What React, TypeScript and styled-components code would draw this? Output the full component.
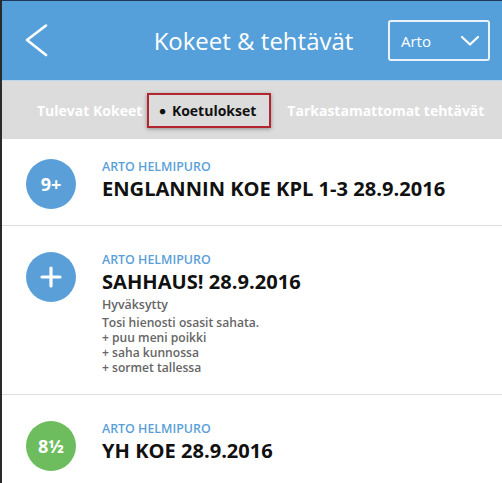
import React from "react";
import styled, { createGlobalStyle } from "styled-components";

const Global = createGlobalStyle`
  html, body { margin: 0; padding: 0; background: #ffffff; }
  body { font-family: "Open Sans", Lato, sans-serif; overflow: hidden; }
  * { box-sizing: border-box; }
`;

const Page = styled.div`
  width: 502px;
  height: 483px;
  overflow: hidden;
  border-left: 2px solid #2a2a2a;
  background: #ffffff;
`;

const Header = styled.header`
  height: 81px;
  background: #55a0da;
  border-top: 1px solid #1d3a58;
  border-bottom: 1px solid #bcd6ec;
  display: grid;
  grid-template-columns: 100px 1fr 100px;
  align-items: center;
  position: relative;
  padding: 0 12px 0 23px;
`;

const BackButton = styled.div`
  display: flex;
  align-items: center;
  height: 36px;
`;

const Title = styled.h1`
  margin: 0;
  text-align: center;
  color: #ffffff;
  font-size: 24px;
  font-weight: 400;
  padding-right: 8px;
`;

const Select = styled.div`
  position: absolute;
  left: 386px;
  top: 19px;
  width: 102px;
  height: 41px;
  border: 2px solid #e9f3fb;
  border-radius: 3px;
  display: flex;
  align-items: center;
  justify-content: space-between;
  padding: 0 8px 0 11px;
  color: #ffffff;
  font-size: 15px;
`;

const TabBar = styled.nav`
  height: 58px;
  background: #dcdcdc;
  display: flex;
  align-items: center;
  padding-left: 35px;
  white-space: nowrap;
`;

const Tab = styled.div<{ $active?: boolean }>`
  font-size: 14px;
  font-weight: 700;
  color: ${(p) => (p.$active ? "#111111" : "#ffffff")};
  ${(p) =>
    p.$active &&
    `
    margin: 0 16px 0 5px;
    height: 35px;
    padding: 0 13px 0 10px;
    display: flex;
    align-items: center;
    border: 2px solid #b3262d;
    box-shadow: 0 1px 4px rgba(0,0,0,0.35);
  `}
`;

const Dot = styled.span`
  font-size: 11px;
  margin-right: 6px;
`;

const List = styled.div``;

const Row = styled.div<{ $top: number; $bottom: number }>`
  display: flex;
  align-items: flex-start;
  gap: 26px;
  padding: ${(p) => p.$top}px 0 ${(p) => p.$bottom}px 24px;
  border-bottom: 1px solid #dedede;
`;

const Badge = styled.div<{ $color: string }>`
  flex: 0 0 50px;
  width: 50px;
  height: 50px;
  border-radius: 50%;
  background: ${(p) => p.$color};
  color: #ffffff;
  display: flex;
  align-items: center;
  justify-content: center;
  font-size: 18px;
  font-weight: 700;
`;

const Info = styled.div`
  display: flex;
  flex-direction: column;
`;

const Teacher = styled.div`
  color: #5a9fd8;
  font-size: 12.4px;
  font-weight: 600;
  line-height: 16px;
`;

const Heading = styled.div`
  color: #111111;
  font-size: 20.1px;
  font-weight: 700;
  line-height: 24px;
  margin-top: 2px;
`;

const Status = styled.div`
  color: #666666;
  font-size: 12.4px;
  font-weight: 600;
  line-height: 16px;
  margin-top: 3px;
`;

const Comment = styled.div`
  color: #666666;
  font-size: 12.1px;
  font-weight: 600;
  line-height: 15px;
  margin-top: 2px;
`;

const PlusIcon = () => (
  <svg width="22" height="22" viewBox="0 0 22 22">
    <path d="M11 2 V20 M2 11 H20" stroke="#fff" strokeWidth="3.2" strokeLinecap="round" />
  </svg>
);

export default function App() {
  return (
    <>
      <Global />
      <Page>
        <Header>
          <BackButton>
            <svg width="24" height="34" viewBox="0 0 24 34">
              <polyline points="21,1.5 2,16 21,31" fill="none" stroke="#fff" strokeWidth="2.6" strokeLinecap="round" strokeLinejoin="round" />
            </svg>
          </BackButton>
          <Title>Kokeet &amp; tehtävät</Title>
          <div />
          <Select>
            <span>Arto</span>
            <svg width="20" height="12" viewBox="0 0 20 12">
              <polyline points="2,2 10,9.5 18,2" fill="none" stroke="#fff" strokeWidth="2.2" strokeLinecap="round" strokeLinejoin="round" />
            </svg>
          </Select>
        </Header>
        <TabBar>
          <Tab>Tulevat Kokeet</Tab>
          <Tab $active>
            <Dot>●</Dot>Koetulokset
          </Tab>
          <Tab>Tarkastamattomat tehtävät</Tab>
        </TabBar>
        <List>
          <Row $top={20} $bottom={16}>
            <Badge $color="#5a9fd8">9+</Badge>
            <Info>
              <Teacher>ARTO HELMIPURO</Teacher>
              <Heading>ENGLANNIN KOE KPL 1-3 28.9.2016</Heading>
            </Info>
          </Row>
          <Row $top={26} $bottom={19}>
            <Badge $color="#5a9fd8"><PlusIcon /></Badge>
            <Info>
              <Teacher>ARTO HELMIPURO</Teacher>
              <Heading>SAHHAUS! 28.9.2016</Heading>
              <Status>Hyväksytty</Status>
              <Comment>
                Tosi hienosti osasit sahata.<br />
                + puu meni poikki<br />
                + saha kunnossa<br />
                + sormet tallessa
              </Comment>
            </Info>
          </Row>
          <Row $top={26} $bottom={20}>
            <Badge $color="#6dbd5e">8½</Badge>
            <Info>
              <Teacher>ARTO HELMIPURO</Teacher>
              <Heading>YH KOE 28.9.2016</Heading>
            </Info>
          </Row>
        </List>
      </Page>
    </>
  );
}
